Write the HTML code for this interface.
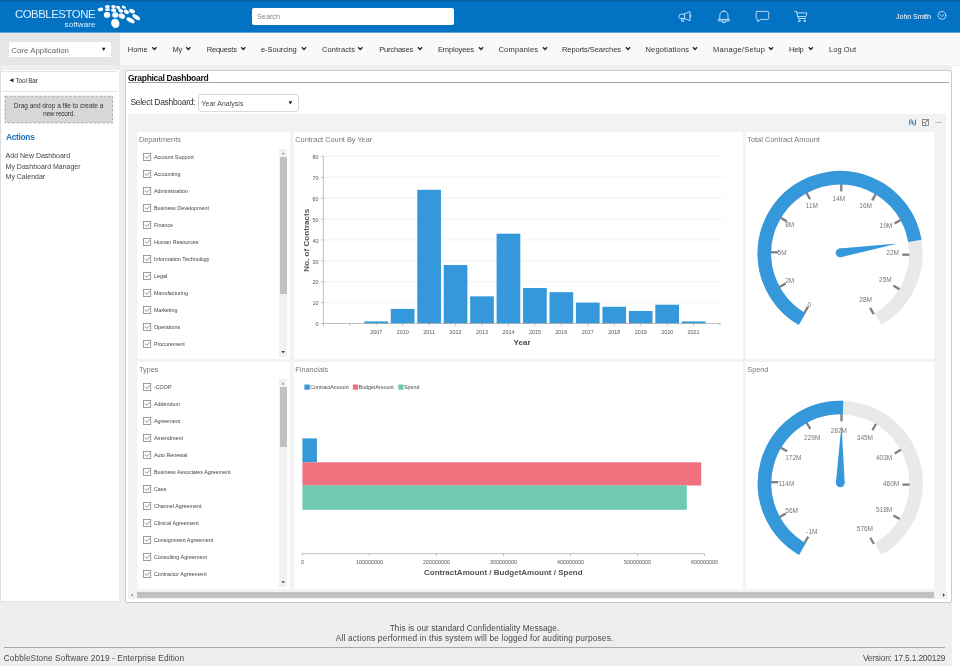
<!DOCTYPE html>
<html lang="en"><head><meta charset="utf-8"><title>Graphical Dashboard</title>
<style>
html,body{margin:0;padding:0;}
body{width:960px;height:666px;overflow:hidden;position:relative;background:#eeeeee;font-family:"Liberation Sans",sans-serif;}
.b{position:absolute;box-sizing:border-box;}
.t{position:absolute;white-space:nowrap;line-height:1;margin:0;}
svg{position:absolute;left:0;top:0;overflow:visible;}
#w{position:absolute;left:0;top:0;width:960px;height:666px;overflow:hidden;will-change:transform;background:#eeeeee;}
</style></head><body><div id="w">
<div class="b" style="left:0px;top:33px;width:960px;height:32px;background:#f9f9f9;"></div>
<div class="b" style="left:0px;top:33px;width:119.8px;height:32px;background:#e6e6e6;"></div>
<svg width="960" height="40"><rect x="0" y="0" width="960" height="32.6" fill="#0472c3"/><rect x="0" y="0" width="960" height="1.4" fill="#0a5c9f"/></svg>
<div class="b" style="left:952px;top:66px;width:8px;height:600px;background:#ffffff;"></div>
<svg width="960" height="40"><ellipse cx="100.5" cy="9.4" rx="2.8" ry="1.8" fill="#fff" transform="rotate(-10 100.5 9.4)"/><ellipse cx="107.4" cy="6.6" rx="2.5" ry="1.6" fill="#fff" transform="rotate(0 107.4 6.6)"/><ellipse cx="107.5" cy="9.6" rx="2.4" ry="1.7" fill="#fff" transform="rotate(0 107.5 9.6)"/><ellipse cx="107" cy="14.9" rx="3.2" ry="2.8" fill="#fff" transform="rotate(0 107 14.9)"/><ellipse cx="113.4" cy="6.6" rx="2.2" ry="1.6" fill="#fff" transform="rotate(0 113.4 6.6)"/><ellipse cx="113.6" cy="10.3" rx="2.6" ry="2.0" fill="#fff" transform="rotate(10 113.6 10.3)"/><ellipse cx="115.3" cy="15" rx="3.1" ry="2.8" fill="#fff" transform="rotate(10 115.3 15)"/><ellipse cx="115.3" cy="23.4" rx="4.1" ry="4.6" fill="#fff" transform="rotate(-20 115.3 23.4)"/><ellipse cx="118.1" cy="7.4" rx="2.2" ry="1.5" fill="#fff" transform="rotate(25 118.1 7.4)"/><ellipse cx="120.6" cy="10.6" rx="2.6" ry="1.8" fill="#fff" transform="rotate(25 120.6 10.6)"/><ellipse cx="121.9" cy="16.1" rx="3.3" ry="2.5" fill="#fff" transform="rotate(30 121.9 16.1)"/><ellipse cx="123.9" cy="7.2" rx="2.2" ry="1.4" fill="#fff" transform="rotate(25 123.9 7.2)"/><ellipse cx="126.4" cy="11.9" rx="2.8" ry="1.9" fill="#fff" transform="rotate(30 126.4 11.9)"/><ellipse cx="130.5" cy="20.3" rx="4.6" ry="2.1" fill="#fff" transform="rotate(30 130.5 20.3)"/><ellipse cx="132" cy="11.1" rx="3.1" ry="2.0" fill="#fff" transform="rotate(28 132 11.1)"/><ellipse cx="136.25" cy="17.2" rx="4.4" ry="2.0" fill="#fff" transform="rotate(35 136.25 17.2)"/></svg>
<div class="b" style="left:252px;top:7.9px;width:202px;height:16.9px;background:#ffffff;border-radius:2px;"></div>
<svg width="960" height="40" fill="none" stroke="#d4ebff" stroke-width="0.85" stroke-linejoin="round" stroke-linecap="round">
<g><path d="M684.1 14.1 h-3 a2.2 2.2 0 0 0 0 4.4 h3 z"/><path d="M684.1 14.1 L690 11.6 V20.7 L684.1 18.5"/><path d="M690.2 14.4 q1.9 1.6 0 3.2"/><path d="M681.4 18.6 l0.5 2.9 h1.6 l-0.4 -2.9"/></g>
<g><path d="M719.8 19.4 v-3.9 a4.1 4.1 0 0 1 8.2 0 v3.9"/><path d="M723.9 10.3 v0.9"/><rect x="718.2" y="19.4" width="11.6" height="1.5" rx="0.75"/><path d="M721.8 21.2 a2.2 1.7 0 0 0 4.4 0"/></g>
<g><path d="M757.2 11.4 h10.5 a1 1 0 0 1 1 1 v6 a1 1 0 0 1 -1 1 h-6.7 l-3.2 2.3 v-2.3 h-0.6 a1 1 0 0 1 -1 -1 v-6 a1 1 0 0 1 1 -1 z"/></g>
<g><path d="M794.7 11.3 h1.7 l2 7.2 h7.2"/><path d="M796.9 12.9 h10 l-1 3.7 h-8"/><circle cx="799.3" cy="20.8" r="0.9"/><circle cx="804.7" cy="20.8" r="0.9"/></g>
<circle cx="941.9" cy="15.4" r="3.9" stroke-width="0.8"/><path d="M940.1 14.8 l1.8 1.7 l1.8 -1.7" stroke-width="0.8"/>
</svg>
<div class="b" style="left:9px;top:42px;width:102px;height:15px;background:#ffffff;"></div>
<svg width="960" height="70" fill="none" stroke="#222" stroke-width="1.25"><path d="M152.30 47.3 l2.1 2.2 l2.1 -2.2"/><path d="M186.20 47.3 l2.1 2.2 l2.1 -2.2"/><path d="M241.20 47.3 l2.1 2.2 l2.1 -2.2"/><path d="M301.90 47.3 l2.1 2.2 l2.1 -2.2"/><path d="M358.20 47.3 l2.1 2.2 l2.1 -2.2"/><path d="M417.90 47.3 l2.1 2.2 l2.1 -2.2"/><path d="M478.90 47.3 l2.1 2.2 l2.1 -2.2"/><path d="M542.90 47.3 l2.1 2.2 l2.1 -2.2"/><path d="M625.90 47.3 l2.1 2.2 l2.1 -2.2"/><path d="M692.90 47.3 l2.1 2.2 l2.1 -2.2"/><path d="M768.90 47.3 l2.1 2.2 l2.1 -2.2"/><path d="M808.70 47.3 l2.1 2.2 l2.1 -2.2"/></svg>
<div class="b" style="left:0px;top:70px;width:119.3px;height:532px;background:#ffffff;border-left:1px solid #ddd;border-bottom:1px solid #e2e2e2;"></div>
<div class="b" style="left:1px;top:71px;width:116px;height:0.8px;background:#e4e4e4;"></div>
<div class="b" style="left:1px;top:91px;width:116px;height:0.8px;background:#e4e4e4;"></div>
<svg width="130" height="130"><rect x="5" y="96.2" width="107.6" height="26.7" fill="#d7d7d7" stroke="#a2a2a2" stroke-width="0.9" stroke-dasharray="2.6 1.7"/></svg>
<div class="b" style="left:125.3px;top:70.3px;width:826.5px;height:532.3px;background:#ffffff;border:1px solid #cbcbcb;border-radius:2px;"></div>
<div class="b" style="left:128px;top:82.1px;width:821px;height:0.9px;background:#a6a6a6;"></div>
<div class="b" style="left:198px;top:94px;width:101px;height:18px;background:#ffffff;border:1px solid #dadada;border-radius:3px;"></div>
<div class="b" style="left:127.8px;top:114.2px;width:818px;height:477px;background:#f2f2f3;"></div>
<svg width="960" height="140" fill="none" stroke-width="0.8">
<rect x="908.8" y="119" width="7.4" height="6.9" rx="1.2" fill="#e1f1fb" stroke="none"/>
<g stroke="#2d6491" stroke-width="0.85"><path d="M909.7 125.2 v-4.4 q0 -0.9 0.9 -0.9 h0.7 q0.9 0 0.9 0.9 v2.2"/><path d="M911.1 122.2 l1.1 1.1 l1.1 -1.1"/><path d="M915.5 119.6 v4.4 q0 0.9 -0.9 0.9 h-0.7 q-0.9 0 -0.9 -0.9 v-1.6"/></g>
<g stroke="#7a7a7a"><rect x="922.5" y="119.4" width="6" height="6"/><path d="M922.5 122.6 h3 v2.8"/><path d="M925.9 122 l2.2 -2.2" stroke="#555" stroke-width="1"/></g>
<circle cx="936" cy="122.4" r="0.55" fill="#a5a5a5"/><circle cx="938.4" cy="122.4" r="0.6" fill="#6a6a6a"/><circle cx="940.8" cy="122.4" r="0.55" fill="#a5a5a5"/>
</svg>
<svg width="960" height="666"><rect x="137.4" y="132.1" width="152.5" height="227.1" fill="#fff"/><rect x="137.4" y="362.0" width="152.5" height="227.2" fill="#fff"/><rect x="293.7" y="132.1" width="449.2" height="227.1" fill="#fff"/><rect x="293.7" y="362.0" width="449.2" height="227.2" fill="#fff"/><rect x="745.7" y="132.1" width="188.5" height="227.1" fill="#fff"/><rect x="745.7" y="362.0" width="188.5" height="227.2" fill="#fff"/></svg>
<svg width="960" height="666" fill="none"><rect x="143.5" y="153.55" width="7.2" height="6.9" stroke="#858585" stroke-width="0.8" fill="#fff"/><path d="M145 156.65 l1.8 1.8 l2.95 -3.1" stroke="#808080" stroke-width="0.9"/><rect x="143.5" y="170.55" width="7.2" height="6.9" stroke="#858585" stroke-width="0.8" fill="#fff"/><path d="M145 173.65 l1.8 1.8 l2.95 -3.1" stroke="#808080" stroke-width="0.9"/><rect x="143.5" y="187.55" width="7.2" height="6.9" stroke="#858585" stroke-width="0.8" fill="#fff"/><path d="M145 190.65 l1.8 1.8 l2.95 -3.1" stroke="#808080" stroke-width="0.9"/><rect x="143.5" y="204.55" width="7.2" height="6.9" stroke="#858585" stroke-width="0.8" fill="#fff"/><path d="M145 207.65 l1.8 1.8 l2.95 -3.1" stroke="#808080" stroke-width="0.9"/><rect x="143.5" y="221.55" width="7.2" height="6.9" stroke="#858585" stroke-width="0.8" fill="#fff"/><path d="M145 224.65 l1.8 1.8 l2.95 -3.1" stroke="#808080" stroke-width="0.9"/><rect x="143.5" y="238.55" width="7.2" height="6.9" stroke="#858585" stroke-width="0.8" fill="#fff"/><path d="M145 241.65 l1.8 1.8 l2.95 -3.1" stroke="#808080" stroke-width="0.9"/><rect x="143.5" y="255.55" width="7.2" height="6.9" stroke="#858585" stroke-width="0.8" fill="#fff"/><path d="M145 258.65 l1.8 1.8 l2.95 -3.1" stroke="#808080" stroke-width="0.9"/><rect x="143.5" y="272.55" width="7.2" height="6.9" stroke="#858585" stroke-width="0.8" fill="#fff"/><path d="M145 275.65 l1.8 1.8 l2.95 -3.1" stroke="#808080" stroke-width="0.9"/><rect x="143.5" y="289.55" width="7.2" height="6.9" stroke="#858585" stroke-width="0.8" fill="#fff"/><path d="M145 292.65 l1.8 1.8 l2.95 -3.1" stroke="#808080" stroke-width="0.9"/><rect x="143.5" y="306.55" width="7.2" height="6.9" stroke="#858585" stroke-width="0.8" fill="#fff"/><path d="M145 309.65 l1.8 1.8 l2.95 -3.1" stroke="#808080" stroke-width="0.9"/><rect x="143.5" y="323.55" width="7.2" height="6.9" stroke="#858585" stroke-width="0.8" fill="#fff"/><path d="M145 326.65 l1.8 1.8 l2.95 -3.1" stroke="#808080" stroke-width="0.9"/><rect x="143.5" y="340.55" width="7.2" height="6.9" stroke="#858585" stroke-width="0.8" fill="#fff"/><path d="M145 343.65 l1.8 1.8 l2.95 -3.1" stroke="#808080" stroke-width="0.9"/><rect x="143.5" y="383.55" width="7.2" height="6.9" stroke="#858585" stroke-width="0.8" fill="#fff"/><path d="M145 386.65 l1.8 1.8 l2.95 -3.1" stroke="#808080" stroke-width="0.9"/><rect x="143.5" y="400.55" width="7.2" height="6.9" stroke="#858585" stroke-width="0.8" fill="#fff"/><path d="M145 403.65 l1.8 1.8 l2.95 -3.1" stroke="#808080" stroke-width="0.9"/><rect x="143.5" y="417.55" width="7.2" height="6.9" stroke="#858585" stroke-width="0.8" fill="#fff"/><path d="M145 420.65 l1.8 1.8 l2.95 -3.1" stroke="#808080" stroke-width="0.9"/><rect x="143.5" y="434.55" width="7.2" height="6.9" stroke="#858585" stroke-width="0.8" fill="#fff"/><path d="M145 437.65 l1.8 1.8 l2.95 -3.1" stroke="#808080" stroke-width="0.9"/><rect x="143.5" y="451.55" width="7.2" height="6.9" stroke="#858585" stroke-width="0.8" fill="#fff"/><path d="M145 454.65 l1.8 1.8 l2.95 -3.1" stroke="#808080" stroke-width="0.9"/><rect x="143.5" y="468.55" width="7.2" height="6.9" stroke="#858585" stroke-width="0.8" fill="#fff"/><path d="M145 471.65 l1.8 1.8 l2.95 -3.1" stroke="#808080" stroke-width="0.9"/><rect x="143.5" y="485.55" width="7.2" height="6.9" stroke="#858585" stroke-width="0.8" fill="#fff"/><path d="M145 488.65 l1.8 1.8 l2.95 -3.1" stroke="#808080" stroke-width="0.9"/><rect x="143.5" y="502.55" width="7.2" height="6.9" stroke="#858585" stroke-width="0.8" fill="#fff"/><path d="M145 505.65 l1.8 1.8 l2.95 -3.1" stroke="#808080" stroke-width="0.9"/><rect x="143.5" y="519.55" width="7.2" height="6.9" stroke="#858585" stroke-width="0.8" fill="#fff"/><path d="M145 522.65 l1.8 1.8 l2.95 -3.1" stroke="#808080" stroke-width="0.9"/><rect x="143.5" y="536.55" width="7.2" height="6.9" stroke="#858585" stroke-width="0.8" fill="#fff"/><path d="M145 539.65 l1.8 1.8 l2.95 -3.1" stroke="#808080" stroke-width="0.9"/><rect x="143.5" y="553.55" width="7.2" height="6.9" stroke="#858585" stroke-width="0.8" fill="#fff"/><path d="M145 556.65 l1.8 1.8 l2.95 -3.1" stroke="#808080" stroke-width="0.9"/><rect x="143.5" y="570.55" width="7.2" height="6.9" stroke="#858585" stroke-width="0.8" fill="#fff"/><path d="M145 573.65 l1.8 1.8 l2.95 -3.1" stroke="#808080" stroke-width="0.9"/></svg>
<div class="b" style="left:279.2px;top:148.6px;width:7.9px;height:208px;background:#f1f1f1;"></div>
<div class="b" style="left:280px;top:157.2px;width:6.6px;height:137.3px;background:#c1c1c1;"></div>
<div class="b" style="left:279.2px;top:379px;width:7.9px;height:207.6px;background:#f1f1f1;"></div>
<div class="b" style="left:280px;top:387px;width:6.6px;height:60.3px;background:#c1c1c1;"></div>
<div class="b" style="left:127.8px;top:591px;width:820.4px;height:7.7px;background:#f2f2f3;"></div>
<div class="b" style="left:136.5px;top:592.1px;width:797.4px;height:6px;background:#c1c1c1;"></div>
<svg width="960" height="666"><polygon points="101.85,47.85 105.55,47.85 103.70,50.95" fill="#1a1a1a"/><polygon points="13.5,78.15 13.5,82.25 9.4,80.2" fill="#222"/><polygon points="288.60,101.30 292.20,101.30 290.40,104.40" fill="#1a1a1a"/><polygon points="281.50,154.30 284.90,154.30 283.20,152.50" fill="#8c8c8c"/><polygon points="281.20,351.05 285.20,351.05 283.20,353.15" fill="#444"/><polygon points="281.30,384.60 284.70,384.60 283.00,382.80" fill="#8c8c8c"/><polygon points="281.20,581.15 285.20,581.15 283.20,583.25" fill="#444"/><polygon points="132.95,593.40 132.95,596.80 131.05,595.10" fill="#8c8c8c"/><polygon points="942.85,593.10 942.85,597.10 944.95,595.10" fill="#444"/></svg>
<svg width="960" height="666" font-family="Liberation Sans, sans-serif"><line x1="323.4" x2="724" y1="302.61" y2="302.61" stroke="#f1f1f1" stroke-width="0.9"/><line x1="323.4" x2="724" y1="281.73" y2="281.73" stroke="#f1f1f1" stroke-width="0.9"/><line x1="323.4" x2="724" y1="260.84" y2="260.84" stroke="#f1f1f1" stroke-width="0.9"/><line x1="323.4" x2="724" y1="239.95" y2="239.95" stroke="#f1f1f1" stroke-width="0.9"/><line x1="323.4" x2="724" y1="219.06" y2="219.06" stroke="#f1f1f1" stroke-width="0.9"/><line x1="323.4" x2="724" y1="198.18" y2="198.18" stroke="#f1f1f1" stroke-width="0.9"/><line x1="323.4" x2="724" y1="177.29" y2="177.29" stroke="#f1f1f1" stroke-width="0.9"/><line x1="323.4" x2="724" y1="156.40" y2="156.40" stroke="#f1f1f1" stroke-width="0.9"/><line x1="320.9" x2="323.4" y1="323.50" y2="323.50" stroke="#999" stroke-width="0.6"/><text x="318.4" y="326.20" font-size="5.4" fill="#555" text-anchor="end">0</text><line x1="320.9" x2="323.4" y1="302.61" y2="302.61" stroke="#999" stroke-width="0.6"/><text x="318.4" y="305.31" font-size="5.4" fill="#555" text-anchor="end">10</text><line x1="320.9" x2="323.4" y1="281.73" y2="281.73" stroke="#999" stroke-width="0.6"/><text x="318.4" y="284.43" font-size="5.4" fill="#555" text-anchor="end">20</text><line x1="320.9" x2="323.4" y1="260.84" y2="260.84" stroke="#999" stroke-width="0.6"/><text x="318.4" y="263.54" font-size="5.4" fill="#555" text-anchor="end">30</text><line x1="320.9" x2="323.4" y1="239.95" y2="239.95" stroke="#999" stroke-width="0.6"/><text x="318.4" y="242.65" font-size="5.4" fill="#555" text-anchor="end">40</text><line x1="320.9" x2="323.4" y1="219.06" y2="219.06" stroke="#999" stroke-width="0.6"/><text x="318.4" y="221.76" font-size="5.4" fill="#555" text-anchor="end">50</text><line x1="320.9" x2="323.4" y1="198.18" y2="198.18" stroke="#999" stroke-width="0.6"/><text x="318.4" y="200.88" font-size="5.4" fill="#555" text-anchor="end">60</text><line x1="320.9" x2="323.4" y1="177.29" y2="177.29" stroke="#999" stroke-width="0.6"/><text x="318.4" y="179.99" font-size="5.4" fill="#555" text-anchor="end">70</text><line x1="320.9" x2="323.4" y1="156.40" y2="156.40" stroke="#999" stroke-width="0.6"/><text x="318.4" y="159.10" font-size="5.4" fill="#555" text-anchor="end">80</text><line x1="349.75" x2="349.75" y1="323.5" y2="325.9" stroke="#999" stroke-width="0.6"/><line x1="376.20" x2="376.20" y1="323.5" y2="325.9" stroke="#999" stroke-width="0.6"/><line x1="402.65" x2="402.65" y1="323.5" y2="325.9" stroke="#999" stroke-width="0.6"/><line x1="429.10" x2="429.10" y1="323.5" y2="325.9" stroke="#999" stroke-width="0.6"/><line x1="455.55" x2="455.55" y1="323.5" y2="325.9" stroke="#999" stroke-width="0.6"/><line x1="482.00" x2="482.00" y1="323.5" y2="325.9" stroke="#999" stroke-width="0.6"/><line x1="508.45" x2="508.45" y1="323.5" y2="325.9" stroke="#999" stroke-width="0.6"/><line x1="534.90" x2="534.90" y1="323.5" y2="325.9" stroke="#999" stroke-width="0.6"/><line x1="561.35" x2="561.35" y1="323.5" y2="325.9" stroke="#999" stroke-width="0.6"/><line x1="587.80" x2="587.80" y1="323.5" y2="325.9" stroke="#999" stroke-width="0.6"/><line x1="614.25" x2="614.25" y1="323.5" y2="325.9" stroke="#999" stroke-width="0.6"/><line x1="640.70" x2="640.70" y1="323.5" y2="325.9" stroke="#999" stroke-width="0.6"/><line x1="667.15" x2="667.15" y1="323.5" y2="325.9" stroke="#999" stroke-width="0.6"/><line x1="693.60" x2="693.60" y1="323.5" y2="325.9" stroke="#999" stroke-width="0.6"/><rect x="364.35" y="321.41" width="23.7" height="2.09" fill="#3498db"/><text x="376.20" y="334.4" font-size="5.4" fill="#555" text-anchor="middle">2007</text><rect x="390.80" y="308.88" width="23.7" height="14.62" fill="#3498db"/><text x="402.65" y="334.4" font-size="5.4" fill="#555" text-anchor="middle">2010</text><rect x="417.25" y="189.82" width="23.7" height="133.68" fill="#3498db"/><text x="429.10" y="334.4" font-size="5.4" fill="#555" text-anchor="middle">2011</text><rect x="443.70" y="265.01" width="23.7" height="58.48" fill="#3498db"/><text x="455.55" y="334.4" font-size="5.4" fill="#555" text-anchor="middle">2012</text><rect x="470.15" y="296.35" width="23.7" height="27.15" fill="#3498db"/><text x="482.00" y="334.4" font-size="5.4" fill="#555" text-anchor="middle">2013</text><rect x="496.60" y="233.68" width="23.7" height="89.82" fill="#3498db"/><text x="508.45" y="334.4" font-size="5.4" fill="#555" text-anchor="middle">2014</text><rect x="523.05" y="287.99" width="23.7" height="35.51" fill="#3498db"/><text x="534.90" y="334.4" font-size="5.4" fill="#555" text-anchor="middle">2015</text><rect x="549.50" y="292.17" width="23.7" height="31.33" fill="#3498db"/><text x="561.35" y="334.4" font-size="5.4" fill="#555" text-anchor="middle">2016</text><rect x="575.95" y="302.61" width="23.7" height="20.89" fill="#3498db"/><text x="587.80" y="334.4" font-size="5.4" fill="#555" text-anchor="middle">2017</text><rect x="602.40" y="306.79" width="23.7" height="16.71" fill="#3498db"/><text x="614.25" y="334.4" font-size="5.4" fill="#555" text-anchor="middle">2018</text><rect x="628.85" y="310.97" width="23.7" height="12.53" fill="#3498db"/><text x="640.70" y="334.4" font-size="5.4" fill="#555" text-anchor="middle">2019</text><rect x="655.30" y="304.70" width="23.7" height="18.80" fill="#3498db"/><text x="667.15" y="334.4" font-size="5.4" fill="#555" text-anchor="middle">2020</text><rect x="681.75" y="321.41" width="23.7" height="2.09" fill="#3498db"/><text x="693.60" y="334.4" font-size="5.4" fill="#555" text-anchor="middle">2021</text><line x1="323.4" x2="323.4" y1="156" y2="325.9" stroke="#a4a4a4" stroke-width="0.7"/><line x1="323.4" x2="720" y1="323.5" y2="323.5" stroke="#a4a4a4" stroke-width="0.7"/><line x1="720" x2="720" y1="323.5" y2="325.9" stroke="#999" stroke-width="0.6"/><text x="522" y="345" font-size="8.1" font-weight="700" fill="#4c4c4c" text-anchor="middle">Year</text><text transform="translate(308.6,240.2) rotate(-90)" font-size="8.1" font-weight="700" fill="#555" text-anchor="middle">No. of Contracts</text></svg>
<svg width="960" height="666" font-family="Liberation Sans, sans-serif"><rect x="302.4" y="438.4" width="14.5" height="23.9" fill="#3498db"/><rect x="302.4" y="462.3" width="398.8" height="23.2" fill="#ef717d"/><rect x="302.4" y="485.4" width="384.4" height="24.4" fill="#6fcab1"/><line x1="302.2" x2="704.6" y1="553.6" y2="553.6" stroke="#aaa" stroke-width="0.7"/><line x1="302.40" x2="302.40" y1="553.6" y2="556.1" stroke="#aaa" stroke-width="0.7"/><text x="302.40" y="563.6" font-size="5.4" fill="#555" text-anchor="middle">0</text><line x1="369.43" x2="369.43" y1="553.6" y2="556.1" stroke="#aaa" stroke-width="0.7"/><text x="369.43" y="563.6" font-size="5.4" fill="#555" text-anchor="middle">100000000</text><line x1="436.46" x2="436.46" y1="553.6" y2="556.1" stroke="#aaa" stroke-width="0.7"/><text x="436.46" y="563.6" font-size="5.4" fill="#555" text-anchor="middle">200000000</text><line x1="503.49" x2="503.49" y1="553.6" y2="556.1" stroke="#aaa" stroke-width="0.7"/><text x="503.49" y="563.6" font-size="5.4" fill="#555" text-anchor="middle">300000000</text><line x1="570.52" x2="570.52" y1="553.6" y2="556.1" stroke="#aaa" stroke-width="0.7"/><text x="570.52" y="563.6" font-size="5.4" fill="#555" text-anchor="middle">400000000</text><line x1="637.55" x2="637.55" y1="553.6" y2="556.1" stroke="#aaa" stroke-width="0.7"/><text x="637.55" y="563.6" font-size="5.4" fill="#555" text-anchor="middle">500000000</text><line x1="704.58" x2="704.58" y1="553.6" y2="556.1" stroke="#aaa" stroke-width="0.7"/><text x="704.58" y="563.6" font-size="5.4" fill="#555" text-anchor="middle">600000000</text><text x="503.3" y="575" font-size="8" font-weight="700" fill="#525252" text-anchor="middle">ContractAmount / BudgetAmount / Spend</text><rect x="304.4" y="384.5" width="5.2" height="5.2" fill="#3498db"/><text x="310.1" y="389.2" font-size="5.35" fill="#484848">ContractAmount</text><rect x="352.8" y="384.5" width="5.2" height="5.2" fill="#ef717d"/><text x="358.5" y="389.2" font-size="5.35" fill="#484848">BudgetAmount</text><rect x="398.3" y="384.5" width="5.2" height="5.2" fill="#6fcab1"/><text x="404" y="389.2" font-size="5.35" fill="#484848">Spend</text></svg>
<svg width="960" height="666" font-family="Liberation Sans, sans-serif"><path d="M802.19 319.16 A75.82 75.82 0 1 1 878.01 319.16" stroke="#e8eaea" stroke-width="13.6" fill="none"/><path d="M802.19 319.16 A75.82 75.82 0 1 1 914.88 240.99" stroke="#3498db" stroke-width="13.6" fill="none"/><line x1="804.41" y1="312.92" x2="808.01" y2="306.68" stroke="#808080" stroke-width="2.3"/><text x="809.40" y="306.50" font-size="6.5" fill="#777" text-anchor="middle">0</text><line x1="779.48" y1="287.11" x2="785.72" y2="283.51" stroke="#808080" stroke-width="2.3"/><text x="789.70" y="282.90" font-size="6.5" fill="#777" text-anchor="middle">2M</text><line x1="770.80" y1="252.30" x2="778.00" y2="252.30" stroke="#808080" stroke-width="2.3"/><text x="782.10" y="254.60" font-size="6.5" fill="#777" text-anchor="middle">5M</text><line x1="780.68" y1="217.81" x2="786.92" y2="221.41" stroke="#808080" stroke-width="2.3"/><text x="789.70" y="227.00" font-size="6.5" fill="#777" text-anchor="middle">8M</text><line x1="806.49" y1="192.88" x2="810.09" y2="199.12" stroke="#808080" stroke-width="2.3"/><text x="811.90" y="207.80" font-size="6.5" fill="#777" text-anchor="middle">11M</text><line x1="841.30" y1="184.20" x2="841.30" y2="191.40" stroke="#808080" stroke-width="2.3"/><text x="838.90" y="200.50" font-size="6.5" fill="#777" text-anchor="middle">14M</text><line x1="875.79" y1="194.08" x2="872.19" y2="200.32" stroke="#808080" stroke-width="2.3"/><text x="865.60" y="207.80" font-size="6.5" fill="#777" text-anchor="middle">16M</text><line x1="900.72" y1="219.89" x2="894.48" y2="223.49" stroke="#808080" stroke-width="2.3"/><text x="885.90" y="227.50" font-size="6.5" fill="#777" text-anchor="middle">19M</text><line x1="909.40" y1="254.70" x2="902.20" y2="254.70" stroke="#808080" stroke-width="2.3"/><text x="892.70" y="254.80" font-size="6.5" fill="#777" text-anchor="middle">22M</text><line x1="899.52" y1="289.19" x2="893.28" y2="285.59" stroke="#808080" stroke-width="2.3"/><text x="885.40" y="282.40" font-size="6.5" fill="#777" text-anchor="middle">25M</text><line x1="873.71" y1="314.12" x2="870.11" y2="307.88" stroke="#808080" stroke-width="2.3"/><text x="865.60" y="301.90" font-size="6.5" fill="#777" text-anchor="middle">28M</text><path d="M840.81 257.24 L897.73 243.46 L839.39 248.56 Z" fill="#3498db"/><circle cx="840.1" cy="252.9" r="4.4" fill="#3498db"/></svg>
<svg width="960" height="666" font-family="Liberation Sans, sans-serif"><path d="M802.39 549.06 A75.82 75.82 0 1 1 878.21 549.06" stroke="#e8eaea" stroke-width="13.6" fill="none"/><path d="M802.39 549.06 A75.82 75.82 0 0 1 843.08 407.63" stroke="#3498db" stroke-width="13.6" fill="none"/><line x1="804.61" y1="542.82" x2="808.21" y2="536.58" stroke="#808080" stroke-width="2.3"/><text x="811.90" y="533.90" font-size="6.5" fill="#777" text-anchor="middle">-1M</text><line x1="779.68" y1="517.01" x2="785.92" y2="513.41" stroke="#808080" stroke-width="2.3"/><text x="791.70" y="513.10" font-size="6.5" fill="#777" text-anchor="middle">56M</text><line x1="771.00" y1="482.20" x2="778.20" y2="482.20" stroke="#808080" stroke-width="2.3"/><text x="786.50" y="485.50" font-size="6.5" fill="#777" text-anchor="middle">114M</text><line x1="780.88" y1="447.71" x2="787.12" y2="451.31" stroke="#808080" stroke-width="2.3"/><text x="793.30" y="459.60" font-size="6.5" fill="#777" text-anchor="middle">172M</text><line x1="806.69" y1="422.78" x2="810.29" y2="429.02" stroke="#808080" stroke-width="2.3"/><text x="812.20" y="439.80" font-size="6.5" fill="#777" text-anchor="middle">229M</text><line x1="841.50" y1="414.10" x2="841.50" y2="421.30" stroke="#808080" stroke-width="2.3"/><text x="838.90" y="433.10" font-size="6.5" fill="#777" text-anchor="middle">287M</text><line x1="875.99" y1="423.98" x2="872.39" y2="430.22" stroke="#808080" stroke-width="2.3"/><text x="864.90" y="439.80" font-size="6.5" fill="#777" text-anchor="middle">345M</text><line x1="900.92" y1="449.79" x2="894.68" y2="453.39" stroke="#808080" stroke-width="2.3"/><text x="884.10" y="459.60" font-size="6.5" fill="#777" text-anchor="middle">403M</text><line x1="909.60" y1="484.60" x2="902.40" y2="484.60" stroke="#808080" stroke-width="2.3"/><text x="891.10" y="485.50" font-size="6.5" fill="#777" text-anchor="middle">460M</text><line x1="899.72" y1="519.09" x2="893.48" y2="515.49" stroke="#808080" stroke-width="2.3"/><text x="884.10" y="512.30" font-size="6.5" fill="#777" text-anchor="middle">518M</text><line x1="873.91" y1="544.02" x2="870.31" y2="537.78" stroke="#808080" stroke-width="2.3"/><text x="864.90" y="531.40" font-size="6.5" fill="#777" text-anchor="middle">576M</text><path d="M844.70 482.89 L841.52 424.41 L835.90 482.71 Z" fill="#3498db"/><circle cx="840.3" cy="482.79999999999995" r="4.4" fill="#3498db"/></svg>
<div class="b" style="left:4.2px;top:647px;width:941.3px;height:0.9px;background:#a9a9a9;"></div>
<span class="t" id="t0" style="top:9.00px;font-size:11.4px;color:#dcefff;letter-spacing:-0.465px;left:14.9px;">COBBLESTONE</span>
<span class="t" id="t1" style="top:21.00px;font-size:8.1px;color:#dcefff;letter-spacing:0.044px;left:64.6px;">software</span>
<span class="t" id="t2" style="top:13.00px;font-size:7.3px;color:#868686;letter-spacing:-0.025px;left:257px;">Search</span>
<span class="t" id="t3" style="top:13.00px;font-size:7.2px;color:#ffffff;letter-spacing:-0.119px;left:896.1px;">John Smith</span>
<span class="t" id="t4" style="top:47.00px;font-size:7.9px;color:#646464;letter-spacing:0.022px;left:11.2px;">Core Application</span>
<span class="t" id="t5" style="top:46.00px;font-size:7.5px;color:#333;letter-spacing:-0.005px;left:127.8px;">Home</span>
<span class="t" id="t6" style="top:46.00px;font-size:7.5px;color:#333;letter-spacing:-0.300px;left:172.5px;">My</span>
<span class="t" id="t7" style="top:46.00px;font-size:7.5px;color:#333;letter-spacing:-0.227px;left:206.8px;">Requests</span>
<span class="t" id="t8" style="top:46.00px;font-size:7.5px;color:#333;letter-spacing:-0.053px;left:261px;">e-Sourcing</span>
<span class="t" id="t9" style="top:46.00px;font-size:7.5px;color:#333;letter-spacing:0.111px;left:322px;">Contracts</span>
<span class="t" id="t10" style="top:46.00px;font-size:7.5px;color:#333;letter-spacing:-0.180px;left:379.2px;">Purchases</span>
<span class="t" id="t11" style="top:46.00px;font-size:7.5px;color:#333;letter-spacing:-0.126px;left:437.9px;">Employees</span>
<span class="t" id="t12" style="top:46.00px;font-size:7.5px;color:#333;letter-spacing:0.195px;left:498.5px;">Companies</span>
<span class="t" id="t13" style="top:46.00px;font-size:7.5px;color:#333;letter-spacing:-0.069px;left:562px;">Reports/Searches</span>
<span class="t" id="t14" style="top:46.00px;font-size:7.5px;color:#333;letter-spacing:0.163px;left:645.5px;">Negotiations</span>
<span class="t" id="t15" style="top:46.00px;font-size:7.5px;color:#333;letter-spacing:0.291px;left:713px;">Manage/Setup</span>
<span class="t" id="t16" style="top:46.00px;font-size:7.5px;color:#333;letter-spacing:-0.213px;left:789px;">Help</span>
<span class="t" id="t17" style="top:46.00px;font-size:7.5px;color:#333;letter-spacing:0.052px;left:829px;">Log Out</span>
<span class="t" id="t18" style="top:78.00px;font-size:6.4px;color:#333;letter-spacing:-0.165px;left:15.6px;">Tool Bar</span>
<span class="t" id="t19" style="top:103.00px;font-size:6.5px;color:#333;letter-spacing:-0.001px;left:58.60px;transform:translateX(-50%);">Drag and drop a file to create a</span>
<span class="t" id="t20" style="top:111.00px;font-size:6.5px;color:#333;letter-spacing:-0.197px;left:58.90px;transform:translateX(-50%);">new record.</span>
<span class="t" id="t21" style="top:133.00px;font-size:8.4px;color:#1a72bd;font-weight:700;letter-spacing:-0.303px;left:5.9px;">Actions</span>
<span class="t" id="t22" style="top:152.00px;font-size:7px;color:#444;letter-spacing:-0.006px;left:5.6px;">Add New Dashboard</span>
<span class="t" id="t23" style="top:163.00px;font-size:7px;color:#444;letter-spacing:-0.005px;left:5.6px;">My Dashboard Manager</span>
<span class="t" id="t24" style="top:173.00px;font-size:7px;color:#444;letter-spacing:-0.019px;left:5.6px;">My Calendar</span>
<span class="t" id="t25" style="top:74.00px;font-size:8.5px;color:#111;font-weight:700;letter-spacing:-0.298px;left:128px;">Graphical Dashboard</span>
<span class="t" id="t26" style="top:98.00px;font-size:8.5px;color:#333;letter-spacing:-0.309px;left:130.5px;">Select Dashboard:</span>
<span class="t" id="t27" style="top:101.00px;font-size:6.8px;color:#444;letter-spacing:0.103px;left:201.6px;">Year Analysis</span>
<span class="t" id="t28" style="top:136.00px;font-size:7.4px;color:#777;letter-spacing:-0.031px;left:138.9px;">Departments</span>
<span class="t" id="t29" style="top:136.00px;font-size:7.4px;color:#777;letter-spacing:-0.012px;left:295.3px;">Contract Count By Year</span>
<span class="t" id="t30" style="top:136.00px;font-size:7.4px;color:#777;letter-spacing:-0.011px;left:747.3px;">Total Contract Amount</span>
<span class="t" id="t31" style="top:366.00px;font-size:7.4px;color:#777;letter-spacing:-0.055px;left:138.9px;">Types</span>
<span class="t" id="t32" style="top:366.00px;font-size:7.4px;color:#777;letter-spacing:-0.031px;left:295.3px;">Financials</span>
<span class="t" id="t33" style="top:366.00px;font-size:7.4px;color:#777;letter-spacing:-0.094px;left:747.3px;">Spend</span>
<span class="t" id="t34" style="top:155.00px;font-size:5.4px;color:#444;left:153.9px;">Account Support</span>
<span class="t" id="t35" style="top:172.00px;font-size:5.4px;color:#444;left:153.9px;">Accounting</span>
<span class="t" id="t36" style="top:189.00px;font-size:5.4px;color:#444;left:153.9px;">Administration</span>
<span class="t" id="t37" style="top:206.00px;font-size:5.4px;color:#444;left:153.9px;">Business Development</span>
<span class="t" id="t38" style="top:223.00px;font-size:5.4px;color:#444;left:153.9px;">Finance</span>
<span class="t" id="t39" style="top:240.00px;font-size:5.4px;color:#444;left:153.9px;">Human Resources</span>
<span class="t" id="t40" style="top:257.00px;font-size:5.4px;color:#444;left:153.9px;">Information Technology</span>
<span class="t" id="t41" style="top:274.00px;font-size:5.4px;color:#444;left:153.9px;">Legal</span>
<span class="t" id="t42" style="top:291.00px;font-size:5.4px;color:#444;left:153.9px;">Manufacturing</span>
<span class="t" id="t43" style="top:308.00px;font-size:5.4px;color:#444;left:153.9px;">Marketing</span>
<span class="t" id="t44" style="top:325.00px;font-size:5.4px;color:#444;left:153.9px;">Operations</span>
<span class="t" id="t45" style="top:342.00px;font-size:5.4px;color:#444;left:153.9px;">Procurement</span>
<span class="t" id="t46" style="top:385.00px;font-size:5.4px;color:#444;left:153.9px;">-COOP</span>
<span class="t" id="t47" style="top:402.00px;font-size:5.4px;color:#444;left:153.9px;">Addendum</span>
<span class="t" id="t48" style="top:419.00px;font-size:5.4px;color:#444;left:153.9px;">Agreement</span>
<span class="t" id="t49" style="top:436.00px;font-size:5.4px;color:#444;left:153.9px;">Amendment</span>
<span class="t" id="t50" style="top:453.00px;font-size:5.4px;color:#444;left:153.9px;">Auto Renewal</span>
<span class="t" id="t51" style="top:470.00px;font-size:5.4px;color:#444;left:153.9px;">Business Associates Agreement</span>
<span class="t" id="t52" style="top:487.00px;font-size:5.4px;color:#444;left:153.9px;">Case</span>
<span class="t" id="t53" style="top:504.00px;font-size:5.4px;color:#444;left:153.9px;">Channel Agreement</span>
<span class="t" id="t54" style="top:521.00px;font-size:5.4px;color:#444;left:153.9px;">Clinical Agreement</span>
<span class="t" id="t55" style="top:538.00px;font-size:5.4px;color:#444;left:153.9px;">Consignment Agreement</span>
<span class="t" id="t56" style="top:555.00px;font-size:5.4px;color:#444;left:153.9px;">Consulting Agreement</span>
<span class="t" id="t57" style="top:572.00px;font-size:5.4px;color:#444;left:153.9px;">Contractor Agreement</span>
<span class="t" id="t58" style="top:624.00px;font-size:8.3px;color:#484848;letter-spacing:0.092px;left:474.55px;transform:translateX(-50%);">This is our standard Confidentiality Message.</span>
<span class="t" id="t59" style="top:634.00px;font-size:8.3px;color:#484848;letter-spacing:0.170px;left:474.59px;transform:translateX(-50%);">All actions performed in this system will be logged for auditing purposes.</span>
<span class="t" id="t60" style="top:654.00px;font-size:8.3px;color:#484848;letter-spacing:0.083px;left:3.8px;">CobbleStone Software 2019 - Enterprise Edition</span>
<span class="t" id="t61" style="top:654.00px;font-size:8.3px;color:#484848;letter-spacing:-0.135px;right:14.74px;">Version: 17.5.1.200129</span>
</div></body></html>
